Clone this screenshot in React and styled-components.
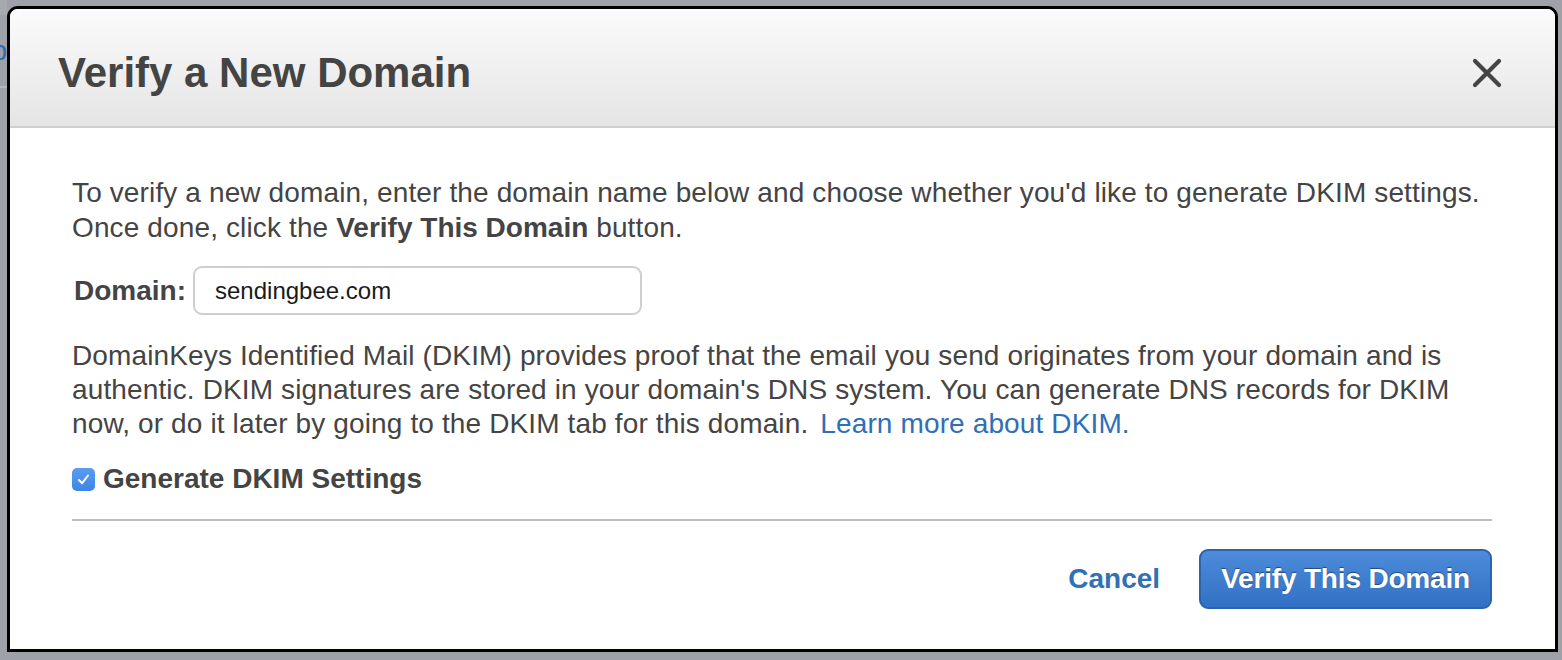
import React from "react";
import styled, { createGlobalStyle } from "styled-components";

const Global = createGlobalStyle`
  html, body { margin: 0; padding: 0; }
  body {
    background: #9ea2a8;
    font-family: "Liberation Sans", Arial, Helvetica, sans-serif;
    width: 1562px;
    height: 660px;
    overflow: hidden;
  }
`;

const Backdrop = styled.div`
  display: flex;
  align-items: flex-start;
  width: 1562px;
  height: 660px;
`;

const Peek = styled.div`
  width: 7px;
  flex: none;
  overflow: hidden;
  display: flex;
  flex-direction: column;
  align-items: flex-end;
`;

const PeekTop = styled.div`
  width: 7px;
  height: 15px;
  background: #a6aaaf;
`;

const PeekText = styled.div`
  height: 71px;
  display: flex;
  justify-content: flex-end;
  align-items: center;
  font-size: 28px;
  color: #2d6db5;
  white-space: nowrap;
  border-bottom: 2px solid #b3b7bc;
  width: 7px;
`;

const Modal = styled.div`
  margin-top: 6px;
  width: 1551px;
  height: 646px;
  box-sizing: border-box;
  border: 3px solid #000;
  border-radius: 11px 11px 0 0;
  background: #fff;
  overflow: hidden;
  display: flex;
  flex-direction: column;
`;

const Header = styled.div`
  height: 119px;
  box-sizing: border-box;
  flex: none;
  display: flex;
  align-items: center;
  justify-content: space-between;
  padding: 10px 52px 0 48px;
  background: linear-gradient(#fbfbfb, #e5e5e5);
  border-bottom: 2px solid #cfcfcf;
`;

const Title = styled.h1`
  margin: 0;
  font-size: 42px;
  font-weight: bold;
  color: #444;
`;

const Close = styled.button`
  border: 0;
  background: none;
  padding: 0;
  width: 32px;
  height: 32px;
  display: flex;
  align-items: center;
  justify-content: center;
  cursor: pointer;
`;

const Body = styled.div`
  padding: 47px 63px 0 62px;
  display: flex;
  flex-direction: column;
  color: #444;
  font-size: 28px;
`;

const Para = styled.p`
  margin: 0;
  letter-spacing: 0.13px;
  line-height: ${(p) => p.$lh || 35}px;
`;

const Strong = styled.b`
  letter-spacing: 0;
`;

const Link = styled.a`
  color: #2f6fb7;
  text-decoration: none;
  margin-left: 12px;
`;

const FieldRow = styled.div`
  display: flex;
  align-items: center;
  gap: 7px;
  margin: 21px 0 24px 2px;
`;

const Label = styled.label`
  font-weight: bold;
  font-size: 28px;
  color: #444;
`;

const Input = styled.input`
  width: 449px;
  height: 49px;
  box-sizing: border-box;
  border: 2px solid #cfcfcf;
  border-radius: 9px;
  padding: 0 0 0 20px;
  font-family: "Liberation Sans", Arial, sans-serif;
  font-size: 24px;
  color: #1a1a1a;
  outline: none;
`;

const CheckRow = styled.label`
  display: flex;
  align-items: center;
  gap: 8px;
  margin-top: 22px;
  font-weight: bold;
  font-size: 28px;
  color: #444;
`;

const Box = styled.span`
  width: 23px;
  height: 23px;
  border-radius: 5px;
  background: linear-gradient(#5b9cf0, #3d86e6);
  display: flex;
  align-items: center;
  justify-content: center;
  flex: none;
`;

const Divider = styled.hr`
  margin: 24px 0 0 0;
  border: 0;
  height: 2px;
  background: #bdbdbd;
`;

const Footer = styled.div`
  display: flex;
  justify-content: flex-end;
  align-items: center;
  gap: 39px;
  margin-top: 28px;
`;

const CancelBtn = styled.button`
  border: 0;
  background: none;
  padding: 0;
  font-family: "Liberation Sans", Arial, sans-serif;
  font-weight: bold;
  font-size: 28px;
  color: #3270b5;
  cursor: pointer;
`;

const Primary = styled.button`
  height: 60px;
  padding: 0 20px;
  box-sizing: border-box;
  border: 2px solid #2c63ad;
  border-radius: 9px;
  background: linear-gradient(#4d8cda, #3270c4);
  color: #fff;
  font-family: "Liberation Sans", Arial, sans-serif;
  font-weight: bold;
  font-size: 28px;
  letter-spacing: -0.18px;
  text-shadow: 0 -1px 1px rgba(0, 0, 0, 0.45);
  cursor: pointer;
`;

export default function App() {
  return (
    <>
      <Global />
      <Backdrop>
        <Peek>
          <PeekTop />
          <PeekText>p</PeekText>
        </Peek>
        <Modal>
          <Header>
            <Title>Verify a New Domain</Title>
            <Close aria-label="Close">
              <svg width="30" height="30" viewBox="0 0 30 30">
                <path d="M3 3 L27 27 M27 3 L3 27" stroke="#444" strokeWidth="4.2" strokeLinecap="round" />
              </svg>
            </Close>
          </Header>
          <Body>
            <Para>
              To verify a new domain, enter the domain name below and choose whether you'd like to generate DKIM settings.
              <br />
              Once done, click the <Strong>Verify This Domain</Strong> button.
            </Para>
            <FieldRow>
              <Label>Domain:</Label>
              <Input defaultValue="sendingbee.com" />
            </FieldRow>
            <Para $lh={34}>
              DomainKeys Identified Mail (DKIM) provides proof that the email you send originates from your domain and is
              authentic. DKIM signatures are stored in your domain's DNS system. You can generate DNS records for DKIM
              now, or do it later by going to the DKIM tab for this domain.
              <Link href="#">Learn more about DKIM.</Link>
            </Para>
            <CheckRow>
              <Box>
                <svg width="15" height="15" viewBox="0 0 15 15">
                  <path d="M3 8 L6.2 11.2 L12 3.5" stroke="#fff" strokeWidth="2" fill="none" strokeLinecap="round" strokeLinejoin="round" />
                </svg>
              </Box>
              Generate DKIM Settings
            </CheckRow>
            <Divider />
            <Footer>
              <CancelBtn>Cancel</CancelBtn>
              <Primary>Verify This Domain</Primary>
            </Footer>
          </Body>
        </Modal>
      </Backdrop>
    </>
  );
}
